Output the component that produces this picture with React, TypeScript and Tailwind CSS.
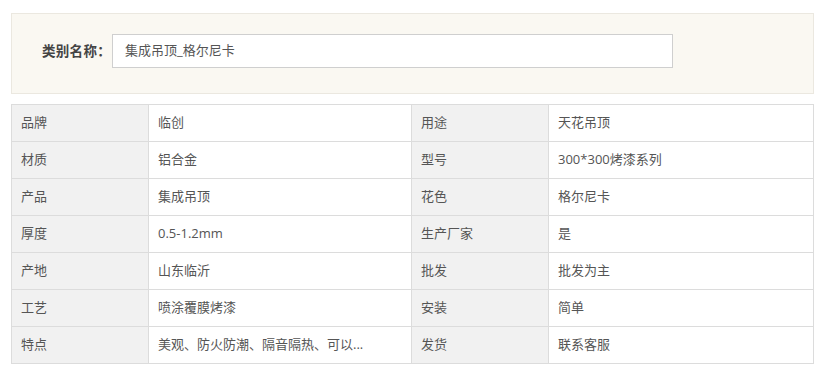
const rows: Array<[string, string, string, string]> = [
  ['品牌', '临创', '用途', '天花吊顶'],
  ['材质', '铝合金', '型号', '300*300烤漆系列'],
  ['产品', '集成吊顶', '花色', '格尔尼卡'],
  ['厚度', '0.5-1.2mm', '生产厂家', '是'],
  ['产地', '山东临沂', '批发', '批发为主'],
  ['工艺', '喷涂覆膜烤漆', '安装', '简单'],
  ['特点', '美观、防火防潮、隔音隔热、可以...', '发货', '联系客服'],
];

export default function App() {
  return (
    <div
      className="w-[825px] h-[380px] bg-white pt-[13px] px-[11px] text-[13px] text-[#555]"
      style={{ fontFamily: '"Open Sans", "Noto Sans CJK SC", sans-serif' }}
    >
      <div className="h-[81px] border border-[#ebe8e0] bg-[#faf8f2] flex items-start pt-[20px] pl-[30px]">
        <span className="h-[34px] flex items-center font-bold text-[13.5px] tracking-[0.3px] text-[#444] w-[70px]">类别名称：</span>
        <div className="w-[561px] h-[34px] bg-white border border-[#cfcfcf] flex items-center pl-[12px] text-[#555]">
          集成吊顶_格尔尼卡
        </div>
      </div>

      <table className="mt-[10px] w-[802px] table-fixed border-collapse">
        <colgroup>
          <col className="w-[137px]" />
          <col className="w-[263px]" />
          <col className="w-[137px]" />
          <col className="w-[265px]" />
        </colgroup>
        <tbody>
          {rows.map((r) => (
            <tr key={r[0]} className="h-[37px]">
              <td className="border border-[#dcdcdc] bg-[#f1f1f1] pl-[9px]">{r[0]}</td>
              <td className="border border-[#dcdcdc] pl-[9px] whitespace-nowrap">{r[1]}</td>
              <td className="border border-[#dcdcdc] bg-[#f1f1f1] pl-[9px]">{r[2]}</td>
              <td className="border border-[#dcdcdc] pl-[9px] whitespace-nowrap">{r[3]}</td>
            </tr>
          ))}
        </tbody>
      </table>
    </div>
  );
}
